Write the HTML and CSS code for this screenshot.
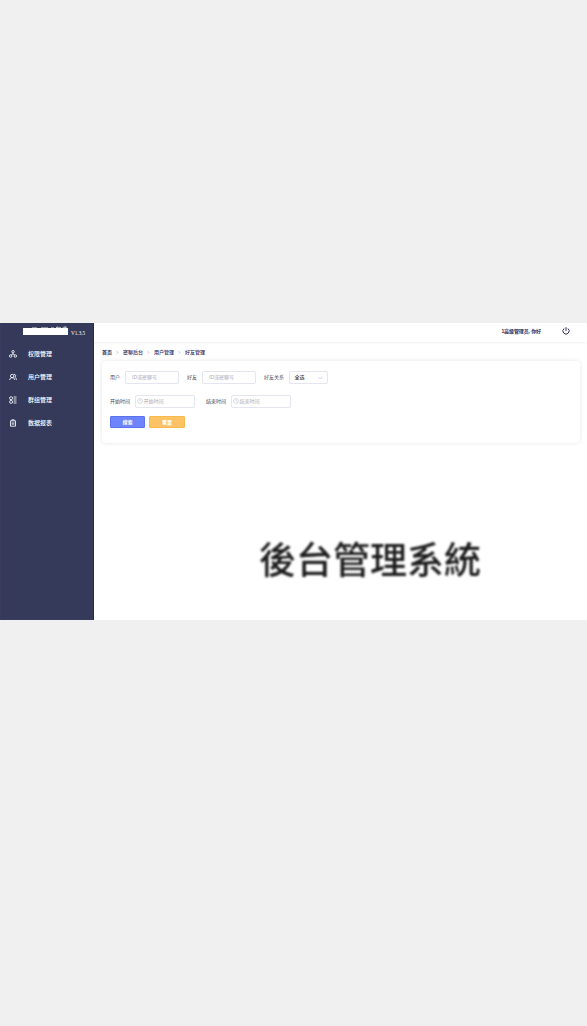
FILE: index.html
```html
<!DOCTYPE html>
<html lang="zh-CN">
<head>
<meta charset="utf-8">
<title>后台管理系统</title>
<link rel="stylesheet" href="styles.css">
</head>
<body>
<div class="app">
  <aside class="sidebar">
    <div class="brand">
      <svg class="brand-bar" viewBox="0 0 45 9"><path d="M0 2h45v7H0z" fill="#fff"/><path d="M9 1.800h5M18 1.800h7M28 1.800h3M33 1.400h5M34.500 .5l-1 1.500M39.500 1.300h4.500M42 0v2" stroke="#fff" stroke-width=".6"/></svg>
      <span class="version">V1.3.5</span>
    </div>
    <nav class="menu">
      <a class="menu-item"><svg class="icon" viewBox="0 0 8 8"><circle cx="4" cy="1.700" r="1.200"/><circle cx="1.700" cy="6" r="1.250"/><circle cx="6.300" cy="6" r="1.250"/><path d="M4 2.900v1L2.300 4.900M4 3.900l1.700 1"/></svg><span>权限管理</span></a>
      <a class="menu-item"><svg class="icon" viewBox="0 0 8 8"><circle cx="3.200" cy="3" r="1.700"/><path d="M.6 7c.2-1.500 1-2.300 2.600-2.300S5.600 5.500 5.800 7M5 1.300c1.600-.2 2.300 1.800.8 2.900 1 .4 1.500 1.200 1.700 2.600"/></svg><span>用户管理</span></a>
      <a class="menu-item"><svg class="icon" viewBox="0 0 8 8"><circle cx="2.100" cy="2.200" r="1.500"/><circle cx="2.100" cy="5.900" r="1.500"/><path d="M4.600 1h2.900M4.600 3h2.900M4.600 5h2.900M4.600 7h2.900"/></svg><span>群组管理</span></a>
      <a class="menu-item"><svg class="icon" viewBox="0 0 8 8"><path d="M1.500 1.800h5v5.400h-5zM2.800 1.800V.8h2.400v1M3.200 3.300v2.500M4.800 3.300v2.500"/></svg><span>数据报表</span></a>
    </nav>
  </aside>
  <main class="main">
    <header class="topbar">
      <span class="greeting">1高级管理员, 你好</span>
      <svg class="power" viewBox="0 0 8 8"><path d="M2.100 1.500a3.100 3.100 0 1 0 3.800 0M4 .2v3.700"/></svg>
    </header>
    <div class="crumbs">
      <b>首页</b><i class="sep"></i><span>密聊后台</span><i class="sep"></i><span>用户管理</span><i class="sep"></i><span>好友管理</span>
    </div>
    <section class="card">
      <div class="row">
        <label class="label">用户</label><div class="field">ID或密聊号</div>
        <label class="label next">好友</label><div class="field">ID或密聊号</div>
        <label class="label next">好友关系</label><div class="field select"><span>全选</span><svg class="chevron" viewBox="0 0 5 4"><path d="M.5 1l2 2 2-2"/></svg></div>
      </div>
      <div class="row dates">
        <label class="label">开始时间</label><div class="field date"><svg class="clock" viewBox="0 0 6 6"><circle cx="3" cy="3" r="2.400"/><path d="M3 1.500V3l1.200.6"/></svg>开始时间</div>
        <label class="label next-date">结束时间</label><div class="field date"><svg class="clock" viewBox="0 0 6 6"><circle cx="3" cy="3" r="2.400"/><path d="M3 1.500V3l1.200.6"/></svg>结束时间</div>
      </div>
      <div class="actions"><button class="btn search">搜索</button><button class="btn reset">重置</button></div>
    </section>
    <h1 class="title" lang="zh-TW">後台管理系統</h1>
  </main>
</div>
</body>
</html>
```
FILE: styles.css
```css
* { box-sizing: border-box; }
body {
  margin: 0;
  height: 1026px;
  padding-top: 323px;
  background: #f0f0f0;
  font: 5px/7px "Liberation Sans", "Noto Sans CJK SC", sans-serif;
  overflow: hidden;
}
.app { display: flex; height: 297px; background: #fff; }
.sidebar {
  width: 94px;
  background: #363a5a;
  border: 1px solid #3b3a61;
  border-top: 0;
  border-right-color: #292c50;
  color: #fff;
}
.brand { display: flex; height: 19px; padding: 3px 0 0 22px; }
.brand-bar { width: 45px; height: 9px; }
.version { margin: 4px 0 0 3px; font: 5.2px/7px "Liberation Serif", serif; color: #fff; }
.menu { display: flex; flex-direction: column; }
.menu-item {
  display: flex;
  align-items: center;
  height: 23px;
  padding-left: 8px;
  font-size: 6px;
  font-weight: 500;
}
.menu-item span { padding-top: 2px; }
.icon {
  width: 8px;
  height: 8px;
  margin-right: 11px;
  fill: none;
  stroke: #f2f3f8;
  stroke-width: .9;
}
.main { flex: 1; min-width: 0; }
.topbar {
  display: flex;
  align-items: center;
  justify-content: flex-end;
  height: 19px;
  padding: 0 17px 3px 0;
  box-shadow: 0 1px 2px rgba(0, 0, 0, .06);
  color: #2b2857;
}
.greeting { font-weight: 700; margin-right: 21px; letter-spacing: -.1px; }
.power { width: 8px; height: 8px; fill: none; stroke: #34315f; stroke-width: 1; }
.crumbs { display: flex; align-items: center; height: 19px; padding: 2px 0 0 8px; color: #302c60; font-weight: 500; }
.sep {
  width: 3px;
  height: 3px;
  margin: 0 5px 0 3px;
  border: solid #dddfe6;
  border-width: 1px 1px 0 0;
  transform: rotate(45deg);
}
.card {
  width: 478px;
  height: 82px;
  margin-left: 8px;
  padding: 10px 8px;
  border-radius: 4px;
  box-shadow: 0 0 4px rgba(0, 0, 0, .11);
  color: #4b4c58;
}
.row { display: flex; align-items: center; height: 13px; }
.dates { margin-top: 11px; height: 12px; }
.label { margin-right: 4.5px; font-weight: 400; }
.next { margin-left: 8px; }
.next-date { margin-left: 11px; }
.field {
  display: flex;
  align-items: center;
  width: 54.5px;
  height: 13px;
  padding-left: 6.5px;
  border: 1px solid #e4e5ef;
  border-radius: 2px;
  color: #a9abb9;
}
.select { width: 39px; padding: 0 4px 0 5px; justify-content: space-between; color: #363742; font-weight: 500; }
.chevron { width: 5px; height: 4px; fill: none; stroke: #b5b7c4; stroke-width: .6; }
.date { width: 60.5px; padding-left: 1.5px; }
.clock { width: 6px; height: 6px; margin-right: .5px; fill: none; stroke: #b5b7c4; stroke-width: .5; }
.actions { display: flex; gap: 4px; margin-top: 9px; }
.btn {
  width: 35px;
  height: 12px;
  padding: 0;
  border: 1px solid #5b71ee;
  border-radius: 1px;
  background: #6d84fa;
  color: #fff;
  font: 700 5px/9px "Liberation Sans", "Noto Sans CJK SC", sans-serif;
}
.reset { width: 36px; border-color: #f8b850; background: #fcc365; }
.title {
  width: 222px;
  height: 37px;
  margin: 97px 0 0 165px;
  color: #1c1c1c;
  font: 500 37px/37px "Noto Sans CJK TC", sans-serif;
  white-space: nowrap;
  filter: blur(.9px);
}
```
